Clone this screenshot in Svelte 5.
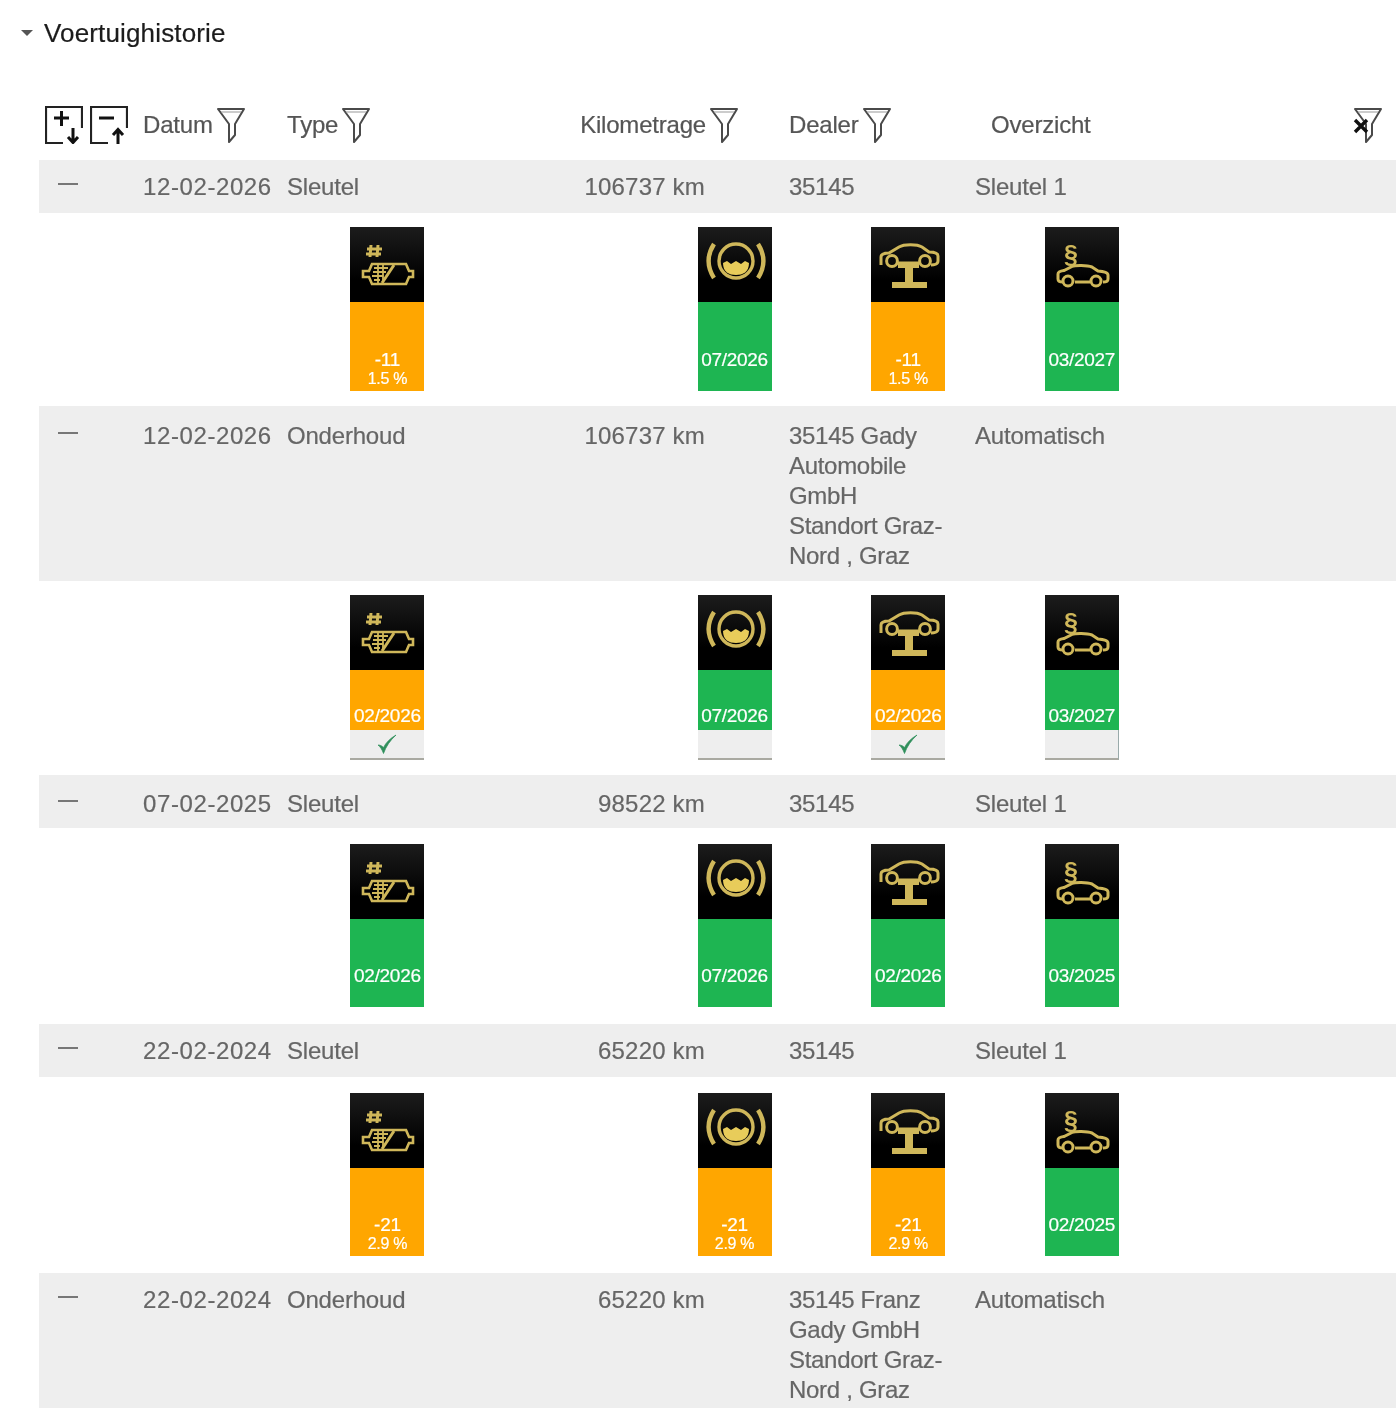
<script lang="ts">
  type Tile = { tone: 'ok' | 'warn'; lines: string[]; check?: boolean; edged?: boolean; footer?: boolean };
  type Entry = {
    date: string; type: string; km: string; dealer: string; overview: string;
    rowClass?: string; loose?: boolean; tiles?: (Tile | null)[];
  };

  const warn = (a: string, b: string): Tile => ({ tone: 'warn', lines: [a, b] });
  const ok = (a: string): Tile => ({ tone: 'ok', lines: [a] });
  const done = (tone: 'ok' | 'warn', a: string, check: boolean, edged = false): Tile =>
    ({ tone, lines: [a], footer: true, check, edged });

  const entries: Entry[] = [
    {
      date: '12-02-2026', type: 'Sleutel', km: '106737 km', dealer: '35145', overview: 'Sleutel 1',
      tiles: [warn('-11', '1.5 %'), null, ok('07/2026'), warn('-11', '1.5 %'), ok('03/2027')],
    },
    {
      date: '12-02-2026', type: 'Onderhoud', km: '106737 km', rowClass: 'tall',
      dealer: '35145 Gady Automobile GmbH Standort Graz-Nord , Graz', overview: 'Automatisch',
      tiles: [done('warn', '02/2026', true), null, done('ok', '07/2026', false), done('warn', '02/2026', true), done('ok', '03/2027', false, true)],
    },
    {
      date: '07-02-2025', type: 'Sleutel', km: '98522 km', dealer: '35145', overview: 'Sleutel 1', rowClass: 'low', loose: true,
      tiles: [ok('02/2026'), null, ok('07/2026'), ok('02/2026'), ok('03/2025')],
    },
    {
      date: '22-02-2024', type: 'Sleutel', km: '65220 km', dealer: '35145', overview: 'Sleutel 1', loose: true,
      tiles: [warn('-21', '2.9 %'), null, warn('-21', '2.9 %'), warn('-21', '2.9 %'), ok('02/2025')],
    },
    {
      date: '22-02-2024', type: 'Onderhoud', km: '65220 km',
      dealer: '35145 Franz Gady GmbH Standort Graz-Nord , Graz', overview: 'Automatisch',
    },
  ];

  // the four service indicators, in column order (slot 1 stays empty)
  const icons = ['dpf', '', 'brake', 'lift', 'law'];
</script>

{#snippet funnel()}
  <svg class="funnel" viewBox="0 0 28 36" width="28" height="36">
    <path d="M1 2H27L18 17V28L12 35V17Z" fill="none" stroke="#4a4a4a" stroke-width="2" stroke-linejoin="round" />
    <path d="M4 5H24" stroke="#999" stroke-width="1" />
  </svg>
{/snippet}

{#snippet icon(name: string)}
  <svg class="glyph" viewBox="0 0 74 75" width="74" height="75">
    <g fill="none" stroke="#cfb75a" stroke-width="2.6">
      {#if name === 'dpf'}
        <path d="M21 18 20 30M28 18 27 30M17 22H32M16 27H31" stroke-width="3" />
        <path d="M13 44H19L22 37H56L59 44H63V50H59L56 57H22L19 50H13Z" />
        <path d="M24 41H38M23 45H36M22 49H33M24 53H30M28 38V56M33 38V55" stroke-width="1.8" />
        <path d="M32 56 44 38" stroke-width="3" />
      {:else if name === 'brake'}
        <circle cx="38" cy="34" r="17" stroke-width="3.4" />
        <path d="M25 36 29 34 33 37 38 34 43 37 47 34 51 36C51 45 45 48 38 48 31 48 25 45 25 36Z" fill="#e8cc5a" stroke="none" />
        <path d="M16 17C9 28 9 40 16 51" stroke-width="4.4" />
        <path d="M60 17C67 28 67 40 60 51" stroke-width="4.4" />
      {:else if name === 'lift'}
        <g stroke-width="3">
          <path d="M10 38V30C10 27 13 26 18 26L28 20C33 17 46 17 51 20L58 25C63 25 67 26 67 29V34C67 37 63 38 60 38M48 36H26" />
          <circle cx="21" cy="34" r="5.4" />
          <circle cx="54" cy="34" r="5.4" />
          <path d="M27 39H48" stroke-width="4" />
        </g>
        <path d="M38 40V56" stroke-width="8" />
        <path d="M21 58H56" stroke-width="6" />
      {:else}
        <text x="19" y="36" class="para">§</text>
        <g stroke-width="3">
          <path d="M13 52V47C13 45 15 44 19 43.5L27 39.5C30 38 42 38 47 40L53 44C58 44.5 63 45 63 48V52C63 54 61 55 58 55M45 55H30M18 55C15 55 13 54 13 52" />
          <circle cx="23" cy="54" r="5" />
          <circle cx="51" cy="54" r="5" />
        </g>
      {/if}
    </g>
  </svg>
{/snippet}

<div class="page">
  <h2 class="title"><span class="caret"></span>Voertuighistorie</h2>

  <div class="row head">
    <div class="tools">
      <svg viewBox="0 0 38 38" width="38" height="38">
        <path d="M18 37H1V1H37V22" fill="none" stroke="#222" stroke-width="2.2" />
        <path d="M9 12H24M16.5 5V20" stroke="#111" stroke-width="3" />
        <path d="M28 22V36M23 31 28 36.5 33 31" fill="none" stroke="#111" stroke-width="3" />
      </svg>
      <svg viewBox="0 0 38 38" width="38" height="38">
        <path d="M18 37H1V1H37V22" fill="none" stroke="#222" stroke-width="2.2" />
        <path d="M9 12H24" stroke="#111" stroke-width="3" />
        <path d="M28 38V24M23 29 28 23.5 33 29" fill="none" stroke="#111" stroke-width="3" />
      </svg>
    </div>
    <div class="hcell">Datum {@render funnel()}</div>
    <div class="hcell">Type {@render funnel()}</div>
    <div class="hcell km">Kilometrage {@render funnel()}</div>
    <div class="hcell">Dealer {@render funnel()}</div>
    <div class="hcell last">
      <span class="over">Overzicht</span>
      <span class="clear">
        {@render funnel()}
        <svg class="x" viewBox="0 0 16 16" width="16" height="16">
          <path d="M2 2 14 14M14 2 2 14" stroke="#111" stroke-width="3.4" />
        </svg>
      </span>
    </div>
  </div>

  {#each entries as e}
    <div class="row entry {e.rowClass ?? ''}">
      <div class="toggle"><span class="minus"></span></div>
      <div class="date">{e.date}</div>
      <div>{e.type}</div>
      <div class="km">{e.km}</div>
      <div class="dealer">{e.dealer}</div>
      <div>{e.overview}</div>
    </div>
    {#if e.tiles}
      <div class="detail" class:loose={e.loose}>
        {#each e.tiles as t, i}
          <div class="slot">
            {#if t}
              <div class="tile">
                {@render icon(icons[i])}
                <div class="val {t.tone}" class:short={t.footer}>
                  <span class="l1">{t.lines[0]}</span>
                  {#if t.lines[1]}<span class="l2">{t.lines[1]}</span>{/if}
                </div>
                {#if t.footer}
                  <div class="foot" class:edged={t.edged}>
                    {#if t.check}
                      <svg viewBox="0 0 20 20" width="20" height="20">
                        <path d="M1 11C3.500 13 5 15.500 6.500 19.500 9 12.500 13 6.500 19 1 13 4.500 9 8.500 6.500 13.500 5 12 3.500 11 1 11Z" fill="#2f8f5b" stroke="#2f8f5b" stroke-width="0.7" />
                      </svg>
                    {/if}
                  </div>
                {/if}
              </div>
            {/if}
          </div>
        {/each}
      </div>
    {/if}
  {/each}
</div>

<style>
  :global(body) {
    background: #fff;
  }
  .page {
    height: 1408px;
    overflow: hidden;
    padding-right: 4px;
    font-family: "Liberation Sans", Arial, sans-serif;
    font-size: 24px;
    letter-spacing: -0.2px;
    color: #666;
    -webkit-text-stroke: 0.2px currentColor;
    filter: blur(0.5px);
    box-sizing: border-box;
  }
  .title {
    display: flex;
    align-items: center;
    height: 66px;
    margin: 0 0 29px;
    padding-left: 21px;
    font-size: 26px;
    font-weight: 400;
    letter-spacing: 0.15px;
    color: #1c1c1c;
  }
  .caret {
    width: 0;
    height: 0;
    margin-right: 11px;
    border-left: 6px solid transparent;
    border-right: 6px solid transparent;
    border-top: 6px solid #555;
  }
  .row {
    display: grid;
    grid-template-columns: 104px 144px 200px 302px 186px 1fr;
    margin-left: 39px;
  }
  .head {
    height: 65px;
    padding-bottom: 5px;
    box-sizing: border-box;
    align-items: center;
    color: #555;
  }
  .tools {
    display: flex;
    gap: 7px;
    padding-left: 6px;
  }
  .tools svg {
    display: block;
  }
  .hcell {
    display: flex;
    align-items: center;
    gap: 4px;
  }
  .hcell.km {
    justify-content: flex-end;
    padding-right: 51px;
  }
  .hcell.last {
    justify-content: space-between;
    padding: 0 14px 0 16px;
  }
  .funnel {
    display: block;
  }
  .clear {
    position: relative;
    display: block;
  }
  .x {
    position: absolute;
    left: -1px;
    top: 11px;
  }
  .entry {
    padding: 12px 0 11px;
    line-height: 30px;
    background: #eee;
  }
  .entry.tall {
    padding: 15px 0 10px;
  }
  .entry.low {
    padding: 14px 0 9px;
  }
  .date {
    letter-spacing: 0.6px;
  }
  .entry .km {
    text-align: right;
    padding-right: 84px;
    letter-spacing: 0.2px;
  }
  .dealer {
    padding-right: 26px;
    letter-spacing: -0.3px;
  }
  .toggle {
    padding: 11px 0 0 19px;
  }
  .minus {
    display: block;
    width: 20px;
    height: 2px;
    background: #777;
  }
  .detail {
    display: flex;
    align-items: flex-start;
    padding: 14px 0 15px 350.4px;
  }
  .detail.loose {
    padding: 16px 0 17px 350.4px;
  }
  .slot {
    width: 173.6px;
  }
  .tile {
    width: 74px;
    text-align: center;
  }
  .glyph {
    display: block;
    background: linear-gradient(#1c1c1c, #000 70%);
  }
  .para {
    font-size: 25px;
    font-weight: 700;
    fill: #cfb75a;
    stroke: none;
  }
  .val {
    display: flex;
    flex-direction: column;
    justify-content: flex-end;
    height: 89px;
    box-sizing: border-box;
    padding-bottom: 22px;
    color: #fff;
    font-size: 19px;
    line-height: 19px;
    letter-spacing: -0.3px;
  }
  .loose .val {
    height: 88px;
  }
  .val:has(.l2) {
    padding-bottom: 3px;
  }
  .val.short {
    height: 60px;
    padding-bottom: 5px;
  }
  .l2 {
    font-size: 16px;
  }
  .ok {
    background: #1eb552;
  }
  .warn {
    background: #ffa600;
  }
  .foot {
    display: flex;
    justify-content: center;
    align-items: center;
    height: 30px;
    box-sizing: border-box;
    background: #eee;
    border-bottom: 2px solid #a9a9a1;
  }
  .foot.edged {
    border-right: 1px solid #9aa;
  }
</style>
